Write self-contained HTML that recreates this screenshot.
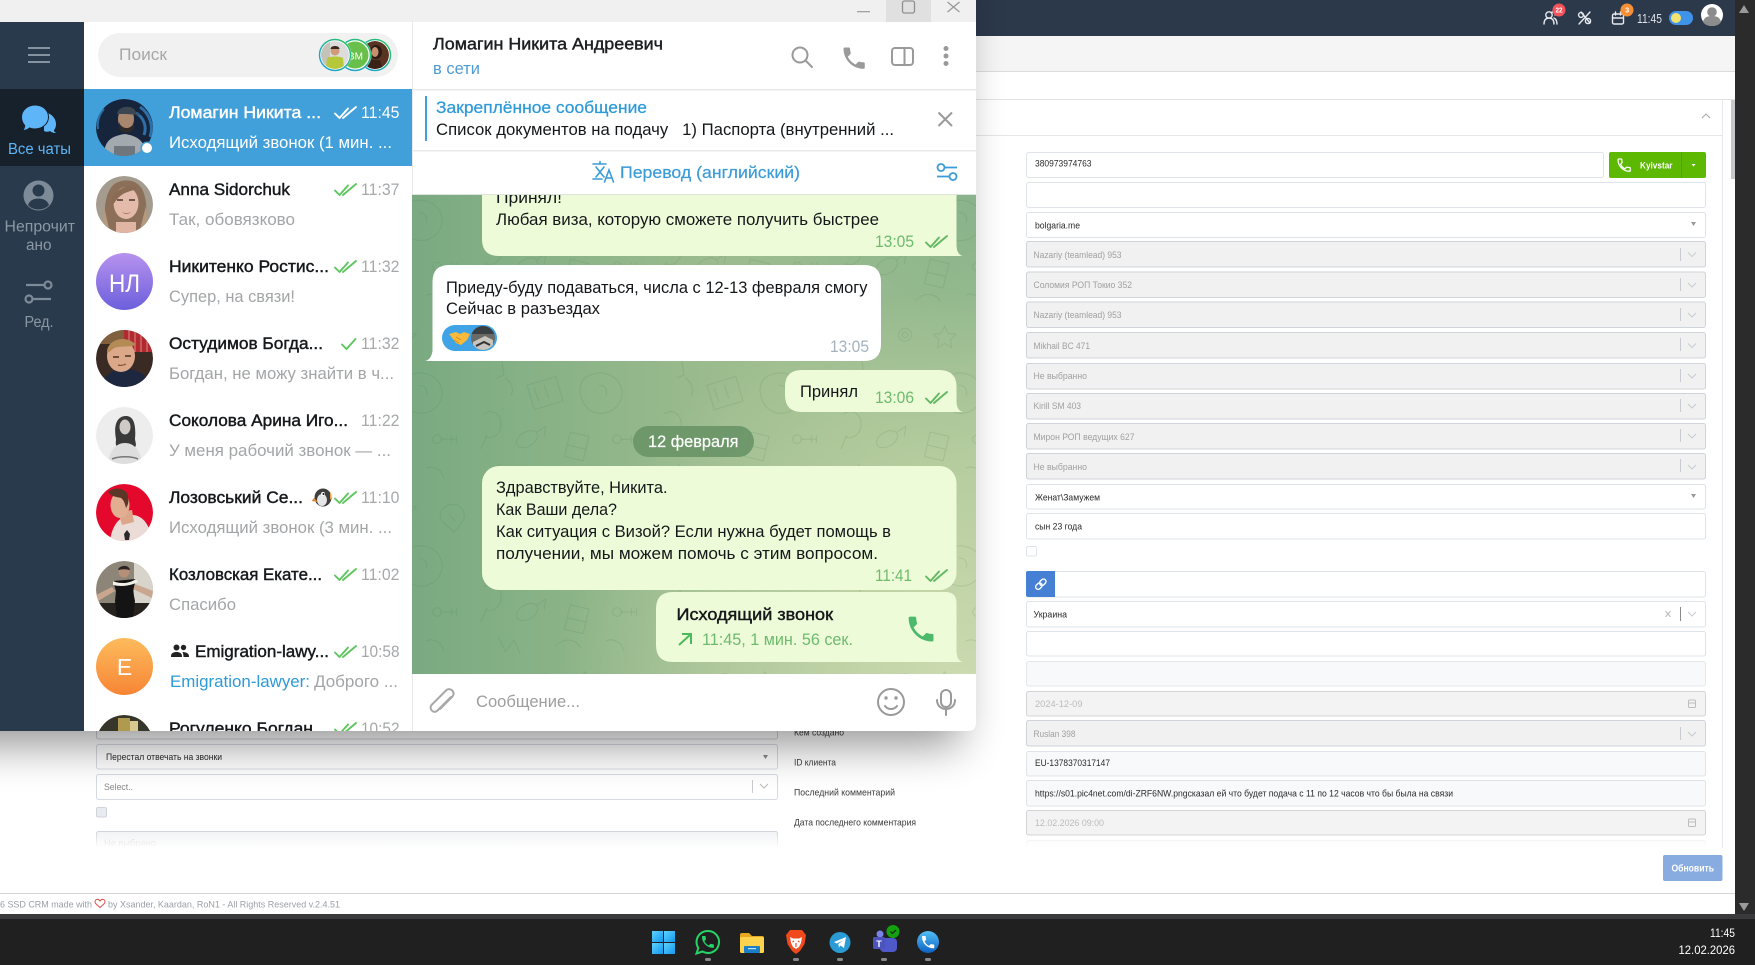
<!DOCTYPE html>
<html lang="ru"><head><meta charset="utf-8"><title>Telegram / CRM</title>
<style>
html,body{margin:0;padding:0;background:#fff;width:1755px;height:965px;overflow:hidden}
svg{display:block}
text{font-family:"Liberation Sans","DejaVu Sans",sans-serif;white-space:pre}
.n{font-size:16.5px;color:#16191c;fill:currentColor;stroke:currentColor;stroke-width:.42px}
.s{font-size:16.5px;fill:#a3a5a7}
.t{font-size:16.5px;fill:#a6a8aa}
.m{font-size:16.5px;fill:#15181a}
.ot{font-size:16.5px;fill:#6dbb6d}
.side{font-size:15.5px;fill:#8b98a4}
.f{font-size:9.5px;fill:#2a2a2a}
.d{font-size:9.5px;fill:#a0a0a0}
.l{font-size:9.5px;fill:#3a3a3a}
</style></head><body>
<svg xmlns="http://www.w3.org/2000/svg" width="1755" height="965" viewBox="0 0 1755 965">
<defs>
<clipPath id="win"><path d="M0 0H976V723Q976 731 968 731H0Z"/></clipPath>
<clipPath id="chatclip"><rect x="412" y="195" width="564" height="479"/></clipPath>
<clipPath id="listclip"><rect x="84" y="89" width="328" height="642"/></clipPath>
<clipPath id="av"><circle cx="28.5" cy="28.5" r="28.5"/></clipPath>
<clipPath id="av2"><circle cx="0" cy="0" r="14"/></clipPath>
<clipPath id="av3"><circle cx="483" cy="338" r="12"/></clipPath>
<linearGradient id="bgx" x1="0" x2="1" y1="0" y2="0"><stop offset="0" stop-color="#7aaa81"/><stop offset=".55" stop-color="#9cbc8e"/><stop offset="1" stop-color="#a4c292"/></linearGradient>
<radialGradient id="bgbr" gradientUnits="userSpaceOnUse" cx="960" cy="690" r="400"><stop offset="0" stop-color="#cfdcb2" stop-opacity=".95"/><stop offset="1" stop-color="#cfdcb2" stop-opacity="0"/></radialGradient>
<radialGradient id="bgtr" gradientUnits="userSpaceOnUse" cx="976" cy="200" r="260"><stop offset="0" stop-color="#86b18a" stop-opacity=".9"/><stop offset="1" stop-color="#86b18a" stop-opacity="0"/></radialGradient>
<pattern id="doodle" patternUnits="userSpaceOnUse" x="412" y="195" width="250" height="240" patternTransform="scale(.72)">
<g fill="none" stroke="#3f6f48" stroke-opacity=".17" stroke-width="1.3" stroke-linecap="round" stroke-linejoin="round">
<path d="M20 40c10-16 30-10 26 6-3 12-18 14-24 6M34 60l4 26-10 4M40 90c8 6 12 14 8 24"/>
<circle cx="95" cy="30" r="9"/><circle cx="95" cy="30" r="4"/>
<path d="M150 18l5 10 11 1-8 8 2 11-10-6-10 6 2-11-8-8 11-1z"/>
<path d="M205 30c14-12 34 2 26 18l-12 16-16-14c-6-8-4-16 2-20zM212 40l8 8"/>
<path d="M70 100l40-12 10 34-40 12zM80 104l6 18M94 100l6 18"/>
<path d="M150 90c20-14 48-6 52 18 2 22-22 38-42 28-16-8-22-34-10-46zM170 100c8 0 12 6 10 14"/>
<path d="M10 140c12-8 24 0 24 14 0 12-10 22-22 18M14 170l-8 18"/>
<ellipse cx="70" cy="175" rx="16" ry="10" transform="rotate(-30 70 175)"/><path d="M84 165l12-8-2 14"/>
<path d="M130 165l26 6-8 34-26-6zM126 183l26 6"/>
<circle cx="195" cy="175" r="6"/><path d="M201 175h20M215 170v10M222 170v10"/>
<path d="M30 210l10 20 12-16 8 18M110 222c10-12 28-10 34 2M180 215c10-4 22 2 24 14"/>
</g></pattern>
<g id="c2" fill="none" stroke-width="1.9" stroke-linecap="round" stroke-linejoin="round"><path d="M0 6.5l4.5 4.5L13 1.5M8 11L21 0"/></g>
<linearGradient id="nl" x1="0" x2="0" y1="0" y2="1"><stop offset="0" stop-color="#b792ee"/><stop offset="1" stop-color="#6c5fdc"/></linearGradient>
<linearGradient id="em" x1="0" x2="0" y1="0" y2="1"><stop offset="0" stop-color="#fdbb5c"/><stop offset="1" stop-color="#f78536"/></linearGradient>
<linearGradient id="wi" x1="0" x2="1" y1="0" y2="1"><stop offset="0" stop-color="#5ed2fb"/><stop offset="1" stop-color="#1398f0"/></linearGradient>
<linearGradient id="ring" x1="0" x2="1" y1="1" y2="0"><stop offset="0" stop-color="#1e9be0"/><stop offset="1" stop-color="#2fc45e"/></linearGradient>
<linearGradient id="fade" x1="0" x2="0" y1="0" y2="1"><stop offset="0" stop-color="#fff" stop-opacity="0"/><stop offset="1" stop-color="#fff"/></linearGradient>
<linearGradient id="phb" x1="0" x2="0" y1="0" y2="1"><stop offset="0" stop-color="#52c0f5"/><stop offset="1" stop-color="#0d62c4"/></linearGradient>
<filter id="sh" x="-20%" y="-20%" width="140%" height="140%"><feGaussianBlur stdDeviation="22"/></filter>
<path id="ph" d="M6.62 10.79c1.44 2.83 3.76 5.14 6.59 6.59l2.2-2.2c.27-.27.67-.36 1.02-.24 1.12.37 2.33.57 3.57.57.55 0 1 .45 1 1V20c0 .55-.45 1-1 1-9.39 0-17-7.61-17-17 0-.55.45-1 1-1h3.5c.55 0 1 .45 1 1 0 1.25.2 2.45.57 3.57.11.35.03.74-.25 1.02l-2.2 2.2z"/>
</defs>

<!-- page -->
<rect width="1755" height="965" fill="#fff"/>
<rect x="976" y="0" width="759" height="36" fill="#2c394b"/>
<rect x="1735" y="0" width="20" height="914" fill="#2b2b2b"/>
<path d="M1739 13l5-8 5 8z" fill="#9a9a9a"/>
<path d="M1739 903l5 8 5-8z" fill="#9a9a9a"/>
<rect x="976" y="36" width="759" height="35" fill="#f5f5f5"/>
<rect x="976" y="71" width="759" height="1" fill="#dcdcdc"/>
<rect x="976" y="99" width="759" height="1" fill="#e4e4e4"/>
<rect x="976" y="135" width="746" height="1" fill="#e6e6e6"/>
<rect x="1722" y="100" width="1" height="748" fill="#e6e8f0"/>
<rect x="1731" y="100" width="4" height="79" fill="#c6c8cc"/>
<path d="M1702 118l4-4 4 4" fill="none" stroke="#a8a8a8" stroke-width="1"/>

<!-- top bar icons -->
<g fill="none" stroke="#e6e9ee" stroke-width="1.4" stroke-linecap="round">
<circle cx="1549" cy="15" r="3.2"/><path d="M1544 24c0-4 2-6 5-6s5 2 5 6M1552 12c2 0 3 1 3 3M1554 18c2 1 3 3 3 6"/>
<path d="M1590 12l-11 12"/><path d="M1581 12l9 11"/><circle cx="1581" cy="15" r="2.4"/><circle cx="1588" cy="21" r="2.6"/>
<rect x="1612.5" y="14" width="11" height="10" rx="1.5"/><path d="M1612.5 18h11M1615.5 12v3M1620.5 12v3"/>
</g>
<circle cx="1559" cy="10" r="6.5" fill="#f4525a"/><text x="1555.5" y="12.5" font-size="7" font-weight="700" fill="#fff" textLength="7" lengthAdjust="spacingAndGlyphs">22</text>
<circle cx="1627" cy="10" r="6.5" fill="#fb8f36"/><text x="1625.2" y="12.5" font-size="7" font-weight="700" fill="#fff">3</text>
<text x="1637" y="23" font-size="12.5" fill="#dfe3e8" textLength="25" lengthAdjust="spacingAndGlyphs">11:45</text>
<rect x="1669" y="11" width="24" height="14" rx="7" fill="#3f93e8"/><circle cx="1676" cy="18" r="5" fill="#f4e26e"/>
<circle cx="1712" cy="15" r="11" fill="#fff"/><circle cx="1712" cy="12" r="4.8" fill="#8c8c8c"/><path d="M1703 22c1-5 5-6 9-6s8 1 9 6c-2 3-5 4-9 4s-7-1-9-4z" fill="#8c8c8c"/>

<!-- right column fields -->
<g stroke-width="1">
<rect x="1026.5" y="152.5" width="577" height="25" rx="2" fill="#fff" stroke="#dfe4ea"/>
<rect x="1026.5" y="182.5" width="679" height="25" rx="2" fill="#fff" stroke="#dfe4ea"/>
<rect x="1026.5" y="212.5" width="679" height="25" rx="2" fill="#fff" stroke="#dfe4ea"/>
<g fill="#f1f1f2" stroke="#cfd3da">
<rect x="1026.5" y="241.5" width="679" height="25.5" rx="2"/>
<rect x="1026.5" y="272" width="679" height="25.5" rx="2"/>
<rect x="1026.5" y="302" width="679" height="25.5" rx="2"/>
<rect x="1026.5" y="332.5" width="679" height="25.5" rx="2"/>
<rect x="1026.5" y="363.5" width="679" height="25.5" rx="2"/>
<rect x="1026.5" y="393.5" width="679" height="25.5" rx="2"/>
<rect x="1026.5" y="423.5" width="679" height="25.5" rx="2"/>
<rect x="1026.5" y="453.5" width="679" height="25.5" rx="2"/>
<rect x="1026.5" y="720.5" width="679" height="25.5" rx="2"/>
</g>
<rect x="1026.5" y="484.5" width="679" height="24.5" rx="2" fill="#fff" stroke="#dfe4ea"/>
<rect x="1026.5" y="513.5" width="679" height="25.5" rx="2" fill="#fff" stroke="#dfe4ea"/>
<rect x="1026.5" y="546.5" width="10" height="9.5" rx="1.5" fill="#fff" stroke="#dfe4ea"/>
<rect x="1026.5" y="571.5" width="679" height="25.5" rx="2" fill="#fff" stroke="#dfe4ea"/>
<rect x="1026.5" y="601.5" width="679" height="25.5" rx="2" fill="#fff" stroke="#dfe4ea"/>
<rect x="1026.5" y="631.5" width="679" height="24.5" rx="2" fill="#fff" stroke="#dfe4ea"/>
<rect x="1026.5" y="661.5" width="679" height="24.5" rx="2" fill="#f8f9fb" stroke="#e4e7ec"/>
<rect x="1026.5" y="691.5" width="679" height="24.5" rx="2" fill="#f3f3f3" stroke="#d2d4d8"/>
<rect x="1026.5" y="751.5" width="679" height="24.5" rx="2" fill="#f8f9fb" stroke="#dfe3ea"/>
<rect x="1026.5" y="780.5" width="679" height="25.5" rx="2" fill="#f8f9fb" stroke="#dfe3ea"/>
<rect x="1026.5" y="810.5" width="679" height="24.5" rx="2" fill="#f3f3f3" stroke="#d2d4d8"/>
<rect x="1026.5" y="840.5" width="679" height="14" rx="2" fill="#fcfcfd" stroke="#f2f3f5"/>
</g>
<rect x="1020" y="840" width="700" height="8" fill="url(#fade)"/>
<rect x="1020" y="848" width="700" height="41" fill="#fff"/>
<rect x="1722" y="100" width="1" height="748" fill="#e6e8f0"/>

<!-- separators and chevrons -->
<g fill="none" stroke="#c8ccd2" stroke-width="1">
<path d="M1680.5 248v13M1680.5 278v13M1680.5 308v13M1680.5 338v13M1680.5 369v13M1680.5 399v13M1680.5 429v13M1680.5 459v13M1680.5 727v13"/>
<path d="M1688 252.5l4 4 4-4M1688 283l4 4 4-4M1688 313l4 4 4-4M1688 343.5l4 4 4-4M1688 374l4 4 4-4M1688 404l4 4 4-4M1688 434l4 4 4-4M1688 465l4 4 4-4M1688 732l4 4 4-4M1688 612l4 4 4-4"/>
</g>
<path d="M1680.5 607v14" stroke="#8a8a8a" stroke-width="1"/>
<path d="M1665.5 611l5 6M1670.5 611l-5 6" stroke="#bbb" stroke-width="1"/>
<path d="M1691 222l5 0-2.5 4zM1691 494l5 0-2.5 4z" fill="#999"/>
<g fill="none" stroke="#bdbdbd" stroke-width="1"><rect x="1688.5" y="700" width="7" height="7.5" rx="1"/><path d="M1688.5 703h7"/><rect x="1688.5" y="819" width="7" height="7.5" rx="1"/><path d="M1688.5 822h7"/></g>

<!-- field text -->
<text class="f" x="1035" y="166.5" textLength="56.5" lengthAdjust="spacingAndGlyphs">380973974763</text>
<text class="f" x="1035" y="228.5" textLength="45" lengthAdjust="spacingAndGlyphs">bolgaria.me</text>
<text class="d" x="1033.5" y="258" textLength="88" lengthAdjust="spacingAndGlyphs">Nazariy (teamlead) 953</text>
<text class="d" x="1033.5" y="288" textLength="98.5" lengthAdjust="spacingAndGlyphs">Соломия РОП Токио 352</text>
<text class="d" x="1033.5" y="318" textLength="88" lengthAdjust="spacingAndGlyphs">Nazariy (teamlead) 953</text>
<text class="d" x="1033.5" y="349" textLength="56.5" lengthAdjust="spacingAndGlyphs">Mikhail BC 471</text>
<text class="d" x="1033.5" y="379" textLength="53.5" lengthAdjust="spacingAndGlyphs">Не выбранно</text>
<text class="d" x="1033.5" y="409" textLength="47.5" lengthAdjust="spacingAndGlyphs">Kirill SM 403</text>
<text class="d" x="1033.5" y="440" textLength="101" lengthAdjust="spacingAndGlyphs">Мирон РОП ведущих 627</text>
<text class="d" x="1033.5" y="470" textLength="53.5" lengthAdjust="spacingAndGlyphs">Не выбранно</text>
<text class="f" x="1035" y="500.5" textLength="65" lengthAdjust="spacingAndGlyphs">Женат\Замужем</text>
<text class="f" x="1035" y="529.5" textLength="47" lengthAdjust="spacingAndGlyphs">сын 23 года</text>
<text class="f" x="1033.5" y="617.5" textLength="33.5" lengthAdjust="spacingAndGlyphs">Украина</text>
<text class="d" x="1035" y="707" style="fill:#bcbcbc" textLength="47.5" lengthAdjust="spacingAndGlyphs">2024-12-09</text>
<text class="d" x="1033.5" y="737" textLength="42" lengthAdjust="spacingAndGlyphs">Ruslan 398</text>
<text class="f" x="1035" y="766" textLength="75" lengthAdjust="spacingAndGlyphs">EU-1378370317147</text>
<text class="f" x="1035" y="796.5" textLength="418" lengthAdjust="spacingAndGlyphs">https://s01.pic4net.com/di-ZRF6NW.pngсказал ей что будет подача с 11 по 12 часов что бы была на связи</text>
<text class="d" x="1035" y="826" style="fill:#bcbcbc" textLength="69" lengthAdjust="spacingAndGlyphs">12.02.2026 09:00</text>

<!-- buttons -->
<rect x="1609" y="152" width="97" height="26" rx="2" fill="#5cb800"/>
<rect x="1681" y="152" width="1" height="26" fill="#4fa300"/>
<use href="#ph" transform="translate(1616,157) scale(.68)" fill="none" stroke="#fff" stroke-width="1.8"/>
<text x="1640" y="168.5" font-size="9.5" font-weight="700" fill="#fff" textLength="32.5" lengthAdjust="spacingAndGlyphs">Kyivstar</text>
<path d="M1691.5 164h4l-2 2.5z" fill="#fff"/>
<path d="M1026 573a2 2 0 0 1 2-2h27v26h-27a2 2 0 0 1-2-2z" fill="#4580d4"/>
<g fill="none" stroke="#fff" stroke-width="1.4" transform="rotate(-45 1041 584)"><rect x="1034.5" y="581.5" width="7" height="5" rx="2.5"/><rect x="1040" y="581.5" width="7" height="5" rx="2.5"/></g>
<rect x="1663" y="855" width="59.5" height="26" rx="2" fill="#88abe0"/>
<text x="1671.5" y="871.5" font-size="10" font-weight="700" fill="#fff" textLength="42.5" lengthAdjust="spacingAndGlyphs">Обновить</text>

<!-- left & label column -->
<rect x="96.5" y="710" width="681" height="29" rx="2" fill="#fff" stroke="#cfd3da"/>
<rect x="96.5" y="744.5" width="681" height="24.5" rx="2" fill="#fff" stroke="#d6dae2"/>
<rect x="96.5" y="774.5" width="681" height="25" rx="2" fill="#fff" stroke="#d6dae2"/>
<rect x="96.5" y="807.5" width="10" height="9.5" rx="1.5" fill="#e8ebf0" stroke="#cfd3da"/>
<rect x="96.5" y="831.5" width="681" height="24" rx="2" fill="#f2f3f6" stroke="#cfd3da"/>
<text class="d" x="104" y="846" style="fill:#c8c8c8" textLength="52" lengthAdjust="spacingAndGlyphs">Не выбрано</text>
<rect x="90" y="832" width="695" height="16" fill="url(#fade)"/>
<rect x="90" y="848" width="695" height="20" fill="#fff"/>
<text class="f" x="106" y="760" textLength="116" lengthAdjust="spacingAndGlyphs">Перестал отвечать на звонки</text>
<path d="M763 755h5l-2.5 4z" fill="#888"/>
<text class="d" x="104" y="790" style="fill:#888" textLength="29" lengthAdjust="spacingAndGlyphs">Select..</text>
<path d="M752.5 780v13" stroke="#c8ccd2"/><path d="M760 784l4 4 4-4" fill="none" stroke="#bbb"/>
<text class="l" x="794" y="735.5" textLength="50" lengthAdjust="spacingAndGlyphs">Кем создано</text>
<text class="l" x="794" y="765.5" textLength="42" lengthAdjust="spacingAndGlyphs">ID клиента</text>
<text class="l" x="794" y="795.5" textLength="101" lengthAdjust="spacingAndGlyphs">Последний комментарий</text>
<text class="l" x="794" y="825.5" textLength="122" lengthAdjust="spacingAndGlyphs">Дата последнего комментария</text>

<!-- footer -->
<rect x="0" y="893" width="1735" height="1" fill="#d4d4d4"/>
<text x="0" y="907.5" font-size="9.5" fill="#9aa0a8" textLength="92" lengthAdjust="spacingAndGlyphs">6 SSD CRM made with</text>
<path d="M100 901c-2-3-5-1.500-5 1 .3 2 3 3.600 5 5.500 2-1.900 4.700-3.500 5-5.500 0-2.500-3-4-5-1z" fill="none" stroke="#e0524c" stroke-width="1"/>
<text x="108" y="907.500" font-size="9.5" fill="#9aa0a8" textLength="232" lengthAdjust="spacingAndGlyphs">by Xsander, Kaardan, RoN1 - All Rights Reserved v.2.4.51</text>

<!-- window shadow -->
<rect x="-60" y="-40" width="1020" height="785" fill="#000" opacity=".42" filter="url(#sh)"/>

<!-- taskbar -->
<rect x="0" y="914" width="1755" height="5" fill="#3a3a3c"/>
<rect x="0" y="919" width="1755" height="46" fill="#202020"/>
<g fill="url(#wi)"><rect x="652" y="931" width="11" height="11"/><rect x="664" y="931" width="11" height="11"/><rect x="652" y="943" width="11" height="11"/><rect x="664" y="943" width="11" height="11"/></g>
<path d="M708 931a11 11 0 1 1-5.500 20.500l-6 2 1.800-5.500A11 11 0 0 1 708 931z" fill="#202020" stroke="#25d366" stroke-width="2"/>
<use href="#ph" transform="translate(700,934) scale(.66)" fill="#25d366"/>
<path d="M740 935a2 2 0 0 1 2-2h7l3 3h10a2 2 0 0 1 2 2v13a2 2 0 0 1-2 2h-20a2 2 0 0 1-2-2z" fill="#e8a820"/>
<rect x="740" y="937" width="24" height="16" rx="1.500" fill="#fdd24c"/>
<rect x="744" y="946" width="16" height="7" rx="1" fill="#1a7fc6"/><rect x="748" y="948" width="8" height="1.200" fill="#bfe0f5"/>
<path d="M790 930h12l4 5-1.500 9-4.500 7-4 3-4-3-4.500-7-1.500-9z" fill="#f0491e"/>
<path d="M790 937l3 1.500h6l3-1.500-1 6-2 4-3 2-3-2-2-4z" fill="#fff"/><path d="M794 941l-1.500 1M798 941l1.500 1M796 943v4" stroke="#f0491e" stroke-width="1.200" fill="none"/>
<circle cx="840" cy="942.500" r="10.500" fill="#2a9bd5"/><path d="M834 942l12-5-2 11-3.500-2.500-1.500 2-.8-3.500 5-3.500-6.500 3z" fill="#fff"/>
<circle cx="880" cy="934" r="3.500" fill="#7b83eb"/><rect x="880" y="938" width="17" height="14" rx="4" fill="#5059c9"/><rect x="873" y="937" width="12" height="12" rx="1.500" fill="#4b53bc"/><text x="876.300" y="947" font-size="9" font-weight="700" fill="#fff">T</text>
<circle cx="893" cy="931.500" r="6.500" fill="#13a10e"/><path d="M890.500 931.500l2 2 3.500-3.500" fill="none" stroke="#17301a" stroke-width="1.300"/>
<circle cx="928" cy="942" r="11" fill="url(#phb)"/><use href="#ph" transform="translate(920,934) scale(.68)" fill="#fff"/>
<g fill="#8a8a8a"><rect x="705" y="958" width="6" height="3" rx="1.500"/><rect x="793" y="958" width="6" height="3" rx="1.500"/><rect x="837" y="958" width="6" height="3" rx="1.500"/><rect x="881" y="958" width="6" height="3" rx="1.500"/><rect x="925" y="958" width="6" height="3" rx="1.500"/></g>
<text x="1710" y="937" font-size="12" fill="#fff" textLength="25" lengthAdjust="spacingAndGlyphs">11:45</text>
<text x="1678.500" y="954" font-size="12" fill="#fff" textLength="56.500" lengthAdjust="spacingAndGlyphs">12.02.2026</text>

<g clip-path="url(#win)">
<rect width="976" height="731" fill="#fff"/>
<rect width="976" height="22" fill="#f0f0f0"/>
<rect x="886" y="0" width="45" height="22" fill="#e0e0e0"/>
<rect x="857" y="11" width="13" height="1.300" fill="#a2a2a2"/>
<rect x="902.500" y="1" width="12" height="12" rx="2" fill="none" stroke="#8f8f8f" stroke-width="1.300"/>
<path d="M947.500 2l12 10M959.500 2l-12 10" stroke="#9a9a9a" stroke-width="1.300"/>

<!-- sidebar -->
<rect x="0" y="22" width="84" height="709" fill="#293a4c"/>
<rect x="0" y="89" width="84" height="77" fill="#17212b"/>
<path d="M28 48h22M28 55h22M28 62h22" stroke="#8592a0" stroke-width="2"/>
<path d="M44 112c7 1 12 6 12 12 0 3-1 5-2 6 0 2 1 2 2 3-3 0-5-1-6-2-2 1-4 1-6 0z" fill="#5eb5f7"/>
<path d="M35 105c8 0 13.500 5.500 13.500 12s-6 12-13.500 12c-2 0-4-.300-5.500-1-1.500 1.500-4 2.500-7 2.500 1.500-1.500 2.200-3 2.200-5C22.500 123 21.500 120 21.500 117c0-6.500 6-12 13.500-12z" fill="#5eb5f7" stroke="#17212b" stroke-width="1"/>
<text x="8" y="154" font-size="15.500px" fill="#5eb5f7" textLength="63" lengthAdjust="spacingAndGlyphs">Все чаты</text>
<circle cx="38.500" cy="195.500" r="15" fill="#7d8b98"/><circle cx="38.500" cy="190.500" r="6" fill="#293a4c"/><path d="M28 205c2-5 6-6.500 10.500-6.500S47 200 49 205c-2.500 3-6.500 4.500-10.500 4.500S30.500 208 28 205z" fill="#293a4c"/>
<text class="side" x="4.500" y="231.500" textLength="70.500" lengthAdjust="spacingAndGlyphs">Непрочит</text>
<text class="side" x="26" y="250" textLength="25.500" lengthAdjust="spacingAndGlyphs">ано</text>
<g fill="none" stroke="#7d8b98" stroke-width="2.200"><path d="M26 285h18M33 299h18"/><circle cx="48" cy="285" r="3.500"/><circle cx="29" cy="299" r="3.500"/></g>
<text class="side" x="24.500" y="327" textLength="29" lengthAdjust="spacingAndGlyphs">Ред.</text>

<!-- search -->
<rect x="98" y="33" width="300" height="44" rx="22" fill="#f1f1f1"/>
<text x="119" y="60" font-size="17px" fill="#a7a7a7" textLength="48" lengthAdjust="spacingAndGlyphs">Поиск</text>
<g transform="translate(375,55)"><circle r="16.500" fill="#fff"/><circle r="15.500" fill="none" stroke="url(#ring)" stroke-width="1.500"/><g clip-path="url(#av2)"><circle r="14" fill="#5a3423"/><ellipse cx="1" cy="-3" rx="6" ry="7" fill="#2a1b14"/><ellipse cx="0" cy="-3" rx="3.500" ry="5" fill="#c98e6e"/><path d="M-8 14l3-9h10l3 9z" fill="#3a2218"/></g></g>
<g transform="translate(355,55)"><circle r="16.500" fill="#fff"/><circle r="15.500" fill="none" stroke="url(#ring)" stroke-width="1.500"/><circle r="13.500" fill="#68c04a"/><text x="-7" y="4.500" font-size="10.500" fill="#fff" textLength="15" lengthAdjust="spacingAndGlyphs">ВМ</text></g>
<g transform="translate(335,55)"><circle r="16.500" fill="#fff"/><circle r="15.500" fill="none" stroke="url(#ring)" stroke-width="1.500"/><g clip-path="url(#av2)"><circle r="14" fill="#dcdcdc"/><rect x="-14" y="-14" width="9" height="28" fill="#c5c2b8"/><path d="M-9 14l1-11c3-2 13-2 16 0l1 11z" fill="#b6c83a"/><circle cx="0" cy="-4" r="4.500" fill="#cf9b78"/><path d="M-4.500-6c0-4 9-4 9 0z" fill="#3a2a20"/></g></g>

<!-- chat list -->
<g clip-path="url(#listclip)">
<rect x="84" y="89" width="328" height="77" fill="#419fd9"/>

<!-- r0 -->
<g transform="translate(96,99)" clip-path="url(#av)"><circle cx="28.500" cy="28.500" r="28.500" fill="#16243c"/>
<g fill="none" stroke="#2d6fa8" stroke-width="3"><path d="M40 14a18 18 0 0 1 8 22"/><path d="M44 8a26 26 0 0 1 10 30"/><path d="M8 10a24 24 0 0 0-6 20" stroke-width="2"/></g>
<path d="M8 57c0-14 6-20 21-22 14 2 20 8 22 22z" fill="#a2aab0"/><path d="M18 47h21v10H18z" fill="#5a6068" opacity=".7"/>
<ellipse cx="30" cy="20" rx="8" ry="11" fill="#a9876f"/><path d="M23 23c2 7 12 9 15 0l0 6c-2 6-13 6-15 0z" fill="#2f2a28"/><path d="M21 15c1-9 18-10 19-1 2 1 3 1 5 2l-15-1c-3 0-6 0-9 0z" fill="#3c4752"/></g>
<text class="n" x="169" y="118" style="color:#fff" textLength="152" lengthAdjust="spacingAndGlyphs">Ломагин Никита ...</text>
<use href="#c2" x="335" y="107" stroke="#fff"/>
<text class="t" x="361" y="118" style="fill:#fff" textLength="38.500" lengthAdjust="spacingAndGlyphs">11:45</text>
<text class="s" x="169" y="148" style="fill:#fff" textLength="223" lengthAdjust="spacingAndGlyphs">Исходящий звонок (1 мин. ...</text>
<circle cx="147" cy="148" r="6.500" fill="#419fd9"/><circle cx="147" cy="148" r="5" fill="#fff"/>

<!-- r1 -->
<g transform="translate(96,176)" clip-path="url(#av)"><circle cx="28.500" cy="28.500" r="28.500" fill="#a59c90"/>
<path d="M12 57C6 40 8 14 20 7c10-5 22-3 27 8 5 12 4 30 2 42z" fill="#8b6f58"/><path d="M8 30l6 27h-8zM50 30l3 27h-10z" fill="#b39a7e"/>
<ellipse cx="30" cy="27" rx="12.500" ry="16" fill="#e4bbab"/><path d="M16 22c4-8 14-14 24-11 2 3-8 4-13 7s-8 8-11 12z" fill="#8a6c54"/>
<path d="M21 24h6M33 24h6" stroke="#4a3530" stroke-width="1.500"/><path d="M26 36c3 1.500 6 1.500 9 0-2 2.500-7 2.500-9 0z" fill="#b0605a"/><path d="M20 46h20v11H20z" fill="#e0b5a3"/></g>
<text class="n" x="169" y="195" textLength="121" lengthAdjust="spacingAndGlyphs">Anna Sidorchuk</text>
<use href="#c2" x="335" y="184" stroke="#5ec65e"/>
<text class="t" x="361" y="195" textLength="38.500" lengthAdjust="spacingAndGlyphs">11:37</text>
<text class="s" x="169" y="225" textLength="126" lengthAdjust="spacingAndGlyphs">Так, обовязково</text>

<!-- r2 -->
<circle cx="124.500" cy="281.500" r="28.500" fill="url(#nl)"/>
<text x="124.500" y="292" font-size="25px" fill="#fff" text-anchor="middle" textLength="31" lengthAdjust="spacingAndGlyphs">НЛ</text>
<text class="n" x="169" y="272" textLength="160" lengthAdjust="spacingAndGlyphs">Никитенко Ростис...</text>
<use href="#c2" x="335" y="261" stroke="#5ec65e"/>
<text class="t" x="361" y="272" textLength="38.500" lengthAdjust="spacingAndGlyphs">11:32</text>
<text class="s" x="169" y="302" textLength="126" lengthAdjust="spacingAndGlyphs">Супер, на связи!</text>

<!-- r3 -->
<g transform="translate(96,330)" clip-path="url(#av)"><circle cx="28.500" cy="28.500" r="28.500" fill="#3a2a24"/><rect x="28" y="0" width="30" height="22" fill="#b02a30"/><path d="M33 0v22M39 0v22M45 0v22M51 0v22" stroke="#e08a88" stroke-width="1"/><rect x="0" y="0" width="28" height="14" fill="#80603e"/>
<path d="M5 57c2-12 12-18 24-18s24 6 26 18z" fill="#1d2740"/><ellipse cx="25" cy="26" rx="14" ry="16" fill="#dba98a"/><path d="M11 22c0-12 18-18 28-8 1 3-10 2-17 3s-7 6-11 5z" fill="#b48a55"/><path d="M17 27h6M29 26h6" stroke="#4a3020" stroke-width="1.500"/><path d="M22 35c3 1 6 0 8-1" stroke="#8a4a3a" stroke-width="1.200" fill="none"/></g>
<text class="n" x="169" y="349" textLength="154" lengthAdjust="spacingAndGlyphs">Остудимов Богда...</text>
<path d="M342 344.500l4.500 4.500 9-10" fill="none" stroke="#5ec65e" stroke-width="1.900" stroke-linecap="round"/>
<text class="t" x="361" y="349" textLength="38.500" lengthAdjust="spacingAndGlyphs">11:32</text>
<text class="s" x="169" y="379" textLength="225" lengthAdjust="spacingAndGlyphs">Богдан, не можу знайти в ч...</text>

<!-- r4 -->
<g transform="translate(96,407)" clip-path="url(#av)"><circle cx="28.500" cy="28.500" r="28.500" fill="#ededed"/><path d="M20 32c-2-10-1-22 9-23s11 12 10 23c0 2 2 6 0 8H21c-2-3-1-5-1-8z" fill="#3a3a3a"/><ellipse cx="29" cy="20" rx="5.500" ry="7.500" fill="#cfcac6"/><path d="M12 57c1-12 7-21 17-21s16 9 17 21z" fill="#dedede"/><path d="M16 52c7-3 19-3 26 0" stroke="#777" stroke-width="1.500" fill="none"/></g>
<text class="n" x="169" y="426" textLength="179" lengthAdjust="spacingAndGlyphs">Соколова Арина Иго...</text>
<text class="t" x="361" y="426" textLength="38.500" lengthAdjust="spacingAndGlyphs">11:22</text>
<text class="s" x="169" y="456" textLength="222" lengthAdjust="spacingAndGlyphs">У меня рабочий звонок — ...</text>

<!-- r5 -->
<g transform="translate(96,484)" clip-path="url(#av)"><circle cx="28.500" cy="28.500" r="28.500" fill="#e4092c"/><path d="M14 57c2-16 10-26 22-26s18 12 21 26z" fill="#ecdcd8"/><path d="M22 28l14-2 2 12-12 3z" fill="#dca68a"/><ellipse cx="24" cy="21" rx="9.500" ry="13" fill="#e2ae92"/><path d="M12 8c6-6 20-4 20 5 1 5 0 8-2 11-1-4-2-8-5-10-3-1-10-1-13-6z" fill="#5a3626"/><path d="M28 50l3-4 3 4-1 6h-4z" fill="#2a2a2a"/></g>
<text class="n" x="169" y="503" textLength="134" lengthAdjust="spacingAndGlyphs">Лозовський Се...</text>
<ellipse cx="323" cy="497.500" rx="8.500" ry="9" fill="#3f3f3f"/><ellipse cx="322" cy="500" rx="5" ry="6" fill="#e6e6e6"/><circle cx="323" cy="494" r="2" fill="#fff"/><circle cx="323.500" cy="494" r="1" fill="#111"/><path d="M314 498l-2.500 3 6.500 1z" fill="#e08a30"/><path d="M330 492c2 2 2 6 0 8z" fill="#f0a040"/>
<use href="#c2" x="335" y="492" stroke="#5ec65e"/>
<text class="t" x="361" y="503" textLength="38.500" lengthAdjust="spacingAndGlyphs">11:10</text>
<text class="s" x="169" y="533" textLength="223" lengthAdjust="spacingAndGlyphs">Исходящий звонок (3 мин. ...</text>

<!-- r6 -->
<g transform="translate(96,561)" clip-path="url(#av)"><circle cx="28.500" cy="28.500" r="28.500" fill="#8c8578"/><rect x="38" y="0" width="20" height="57" fill="#d8d4cb"/><rect x="0" y="42" width="57" height="15" fill="#26231f"/>
<path d="M0 34l16-8 3 4-17 10zM57 30l-18-7-2 5 19 9z" fill="#c9a78e"/><path d="M17 20l23-2-3 12 2 10-2 17H21l-2-17 1-10z" fill="#141414"/><path d="M17 20c6 3 16 3 23-2l2 3c-8 4-17 5-25 3z" fill="#f2efe8"/><circle cx="28" cy="11" r="5.500" fill="#b58f78"/><path d="M22 9c1-5 11-6 12 0-4-1-8-1-12 0z" fill="#2a2320"/></g>
<text class="n" x="169" y="580" textLength="153" lengthAdjust="spacingAndGlyphs">Козловская Екате...</text>
<use href="#c2" x="335" y="569" stroke="#5ec65e"/>
<text class="t" x="361" y="580" textLength="38.500" lengthAdjust="spacingAndGlyphs">11:02</text>
<text class="s" x="169" y="610" textLength="67" lengthAdjust="spacingAndGlyphs">Спасибо</text>

<!-- r7 -->
<circle cx="124.500" cy="666.500" r="28.500" fill="url(#em)"/>
<text x="124.500" y="675" font-size="23px" fill="#fff" text-anchor="middle">E</text>
<path d="M171 656c0-3 3-4 5.500-4s5.500 1 5.500 4v1h-11zM182.500 652c2.500 0 6.500 1 6.500 4v1h-5.500c0-2-.5-4-1-5z" fill="#222"/><circle cx="176.500" cy="647.500" r="3" fill="#222"/><circle cx="183.500" cy="647.500" r="2.700" fill="#222"/>
<text class="n" x="195" y="657" textLength="134" lengthAdjust="spacingAndGlyphs">Emigration-lawy...</text>
<use href="#c2" x="335" y="646" stroke="#5ec65e"/>
<text class="t" x="361" y="657" textLength="38.500" lengthAdjust="spacingAndGlyphs">10:58</text>
<text class="s" x="170" y="687" style="fill:#2e9ad8" textLength="140" lengthAdjust="spacingAndGlyphs">Emigration-lawyer:</text>
<text class="s" x="314" y="687" textLength="84" lengthAdjust="spacingAndGlyphs">Доброго ...</text>

<!-- r8 -->
<g transform="translate(96,715)" clip-path="url(#av)"><circle cx="28.500" cy="28.500" r="28.500" fill="#36362a"/><rect x="22" y="3" width="12" height="14" fill="#b09a50"/><rect x="34" y="6" width="8" height="10" fill="#d8c890"/></g>
<text class="n" x="169" y="734" textLength="144" lengthAdjust="spacingAndGlyphs">Рогуленко Богдан</text>
<use href="#c2" x="335" y="723" stroke="#5ec65e"/>
<text class="t" x="361" y="734" textLength="38.500" lengthAdjust="spacingAndGlyphs">10:52</text>
</g>
<rect x="412" y="22" width="1" height="709" fill="#e8e8e8"/>

<!-- header -->
<text class="n" x="433" y="49.500" style="color:#1c1f22" textLength="230" lengthAdjust="spacingAndGlyphs">Ломагин Никита Андреевич</text>
<text x="433" y="74" font-size="16.500px" fill="#4f9bd4" textLength="47" lengthAdjust="spacingAndGlyphs">в сети</text>
<g fill="none" stroke="#9a9a9a" stroke-width="2"><circle cx="800" cy="55" r="7.500"/><path d="M805.500 60.500l6.500 6.500" stroke-linecap="round"/><rect x="892" y="48" width="21" height="17" rx="3"/><path d="M904.500 48v17"/></g>
<use href="#ph" transform="translate(840,44) scale(1.180)" fill="#9a9a9a"/>
<g fill="#9a9a9a"><circle cx="946" cy="48.500" r="2.500"/><circle cx="946" cy="56" r="2.500"/><circle cx="946" cy="63.500" r="2.500"/></g>
<rect x="412" y="89" width="564" height="1.500" fill="#e9e9e9"/>
<rect x="425" y="96" width="2" height="45" fill="#3f9fdb"/>
<text x="436" y="113" font-size="16.500px" font-weight="400" stroke="#2f9ad8" stroke-width=".25" fill="#2f9ad8" textLength="211" lengthAdjust="spacingAndGlyphs">Закреплённое сообщение</text>
<text x="436" y="135" font-size="16.500px" fill="#15181a" textLength="458" lengthAdjust="spacingAndGlyphs">Список документов на подачу &#160; 1) Паспорта (внутренний ...</text>
<path d="M938.500 112.500l13.500 13.500M952 112.500l-13.500 13.500" stroke="#9a9a9a" stroke-width="2"/>
<rect x="412" y="150" width="564" height="1.500" fill="#e9e9e9"/>
<g fill="none" stroke="#3a9bd8" stroke-width="1.600" stroke-linecap="round"><path d="M593 164h13M600 161.500v2.500M596 167l8 10M604 167l-8 10M593 179h9"/><path d="M604.500 182l4.500-12 4.500 12M606 178h6"/></g>
<text x="620" y="178" font-size="16.500px" stroke="#3a9bd8" stroke-width=".2" fill="#3a9bd8" textLength="180" lengthAdjust="spacingAndGlyphs">Перевод (английский)</text>
<g fill="none" stroke="#3a9bd8" stroke-width="1.800"><circle cx="941" cy="167.500" r="3.500"/><path d="M944.500 167.500H957M937 176.500h12.500"/><circle cx="953" cy="176.500" r="3.500"/></g>
<rect x="412" y="194" width="564" height="1.500" fill="#dfe3dd"/>

<!-- chat -->
<g clip-path="url(#chatclip)">
<rect x="412" y="195" width="564" height="479" fill="url(#bgx)"/>
<rect x="412" y="195" width="564" height="479" fill="url(#bgtr)"/>
<rect x="412" y="195" width="564" height="479" fill="url(#bgbr)"/>
<rect x="412" y="195" width="564" height="479" fill="url(#doodle)"/>

<path d="M499 170H939Q956.500 170 956.500 187V246Q957 255 963 256H499Q482 256 482 239V187Q482 170 499 170Z" fill="#eefbd9"/>
<text class="m" x="496" y="203" textLength="66" lengthAdjust="spacingAndGlyphs">Принял!</text>
<text class="m" x="496" y="225" textLength="383" lengthAdjust="spacingAndGlyphs">Любая виза, которую сможете получить быстрее</text>
<text class="ot" x="875" y="247" textLength="39" lengthAdjust="spacingAndGlyphs">13:05</text>
<use href="#c2" x="926" y="236" stroke="#62b862"/>

<path d="M449 265H864Q881 265 881 282V344Q881 361 864 361H425Q431 360 432.500 351V282Q432.500 265 449 265Z" fill="#fff"/>
<text class="m" x="446" y="293" textLength="421.500" lengthAdjust="spacingAndGlyphs">Приеду-буду подаваться, числа с 12-13 февраля смогу</text>
<text class="m" x="446" y="314" textLength="154" lengthAdjust="spacingAndGlyphs">Сейчас в разъездах</text>
<rect x="442" y="325" width="55" height="26" rx="13" fill="#3fa3e6"/>
<path d="M449 334l7-2 4 2 4-2 6 2-3 6-6 5-5-2z" fill="#f9b93a"/><path d="M456 337l5 3M454 340l5 3" stroke="#d48a1e" stroke-width="1"/>
<circle cx="483" cy="338" r="12" fill="#6a6a66"/><g clip-path="url(#av3)"><rect x="471" y="326" width="24" height="8" fill="#3a3f44"/><path d="M473 342l12-6 8 4v10h-20z" fill="#c7c5bd"/><path d="M476 346l8-4 6 3" stroke="#333" stroke-width="2" fill="none"/></g>
<text x="830" y="352" font-size="16.500px" fill="#a4b2c0" textLength="39" lengthAdjust="spacingAndGlyphs">13:05</text>

<path d="M802 370H939Q956.500 370 956.500 387V402Q957 411 963 412H802Q785 412 785 395V387Q785 370 802 370Z" fill="#eefbd9"/>
<text class="m" x="800" y="397" textLength="58" lengthAdjust="spacingAndGlyphs">Принял</text>
<text class="ot" x="875" y="403" textLength="39" lengthAdjust="spacingAndGlyphs">13:06</text>
<use href="#c2" x="926" y="392" stroke="#62b862"/>

<rect x="633" y="426" width="121" height="31" rx="15.500" fill="#6b9668" opacity=".95"/>
<text x="648" y="447" font-size="16.500px" fill="#fff" stroke="#fff" stroke-width=".2" textLength="90.500" lengthAdjust="spacingAndGlyphs">12 февраля</text>

<rect x="482" y="466" width="474.500" height="124" rx="17" fill="#eefbd9"/>
<text class="m" x="496" y="493" textLength="171.500" lengthAdjust="spacingAndGlyphs">Здравствуйте, Никита.</text>
<text class="m" x="496" y="515" textLength="121" lengthAdjust="spacingAndGlyphs">Как Ваши дела?</text>
<text class="m" x="496" y="537" textLength="395" lengthAdjust="spacingAndGlyphs">Как ситуация с Визой? Если нужна будет помощь в</text>
<text class="m" x="496" y="559" textLength="382" lengthAdjust="spacingAndGlyphs">получении, мы можем помочь с этим вопросом.</text>
<text class="ot" x="875" y="581" textLength="37" lengthAdjust="spacingAndGlyphs">11:41</text>
<use href="#c2" x="926" y="570" stroke="#62b862"/>

<path d="M673 592H945Q956.500 592 956.500 603V652Q957 661 963 662H673Q656 662 656 645V609Q656 592 673 592Z" fill="#eefbd9"/>
<text class="n" x="676.500" y="620" style="color:#15181a" textLength="156.500" lengthAdjust="spacingAndGlyphs">Исходящий звонок</text>
<path d="M679 645l12-11M682 634h9v10" fill="none" stroke="#4cba5a" stroke-width="2"/>
<text class="ot" x="702" y="645" textLength="151" lengthAdjust="spacingAndGlyphs">11:45, 1 мин. 56 сек.</text>
<use href="#ph" transform="translate(904.500,612.500) scale(1.380)" fill="#4cba6a"/>
</g>

<!-- composer -->
<g fill="none" stroke="#a8a8a8" stroke-width="2" stroke-linecap="round"><path d="M451 697l-13.500 13.500c-4 4-9.500-2-5.500-6l14-14c2.500-2.500 6-1 7 1s.5 4-1 5.500l-12 12"/></g>
<text x="476" y="707" font-size="16.500px" fill="#9e9e9e" textLength="104" lengthAdjust="spacingAndGlyphs">Сообщение...</text>
<g fill="none" stroke="#9a9a9a" stroke-width="2"><circle cx="891" cy="702" r="13"/><path d="M885 706c3 4 9 4 12 0" stroke-linecap="round"/></g><circle cx="886" cy="698" r="1.700" fill="#9a9a9a"/><circle cx="896" cy="698" r="1.700" fill="#9a9a9a"/>
<g fill="none" stroke="#9a9a9a" stroke-width="2" stroke-linecap="round"><rect x="941" y="690" width="10" height="17" rx="5"/><path d="M937 700c0 12 18 12 18 0M946 709v6"/></g>
</g>
</svg>
</body></html>
